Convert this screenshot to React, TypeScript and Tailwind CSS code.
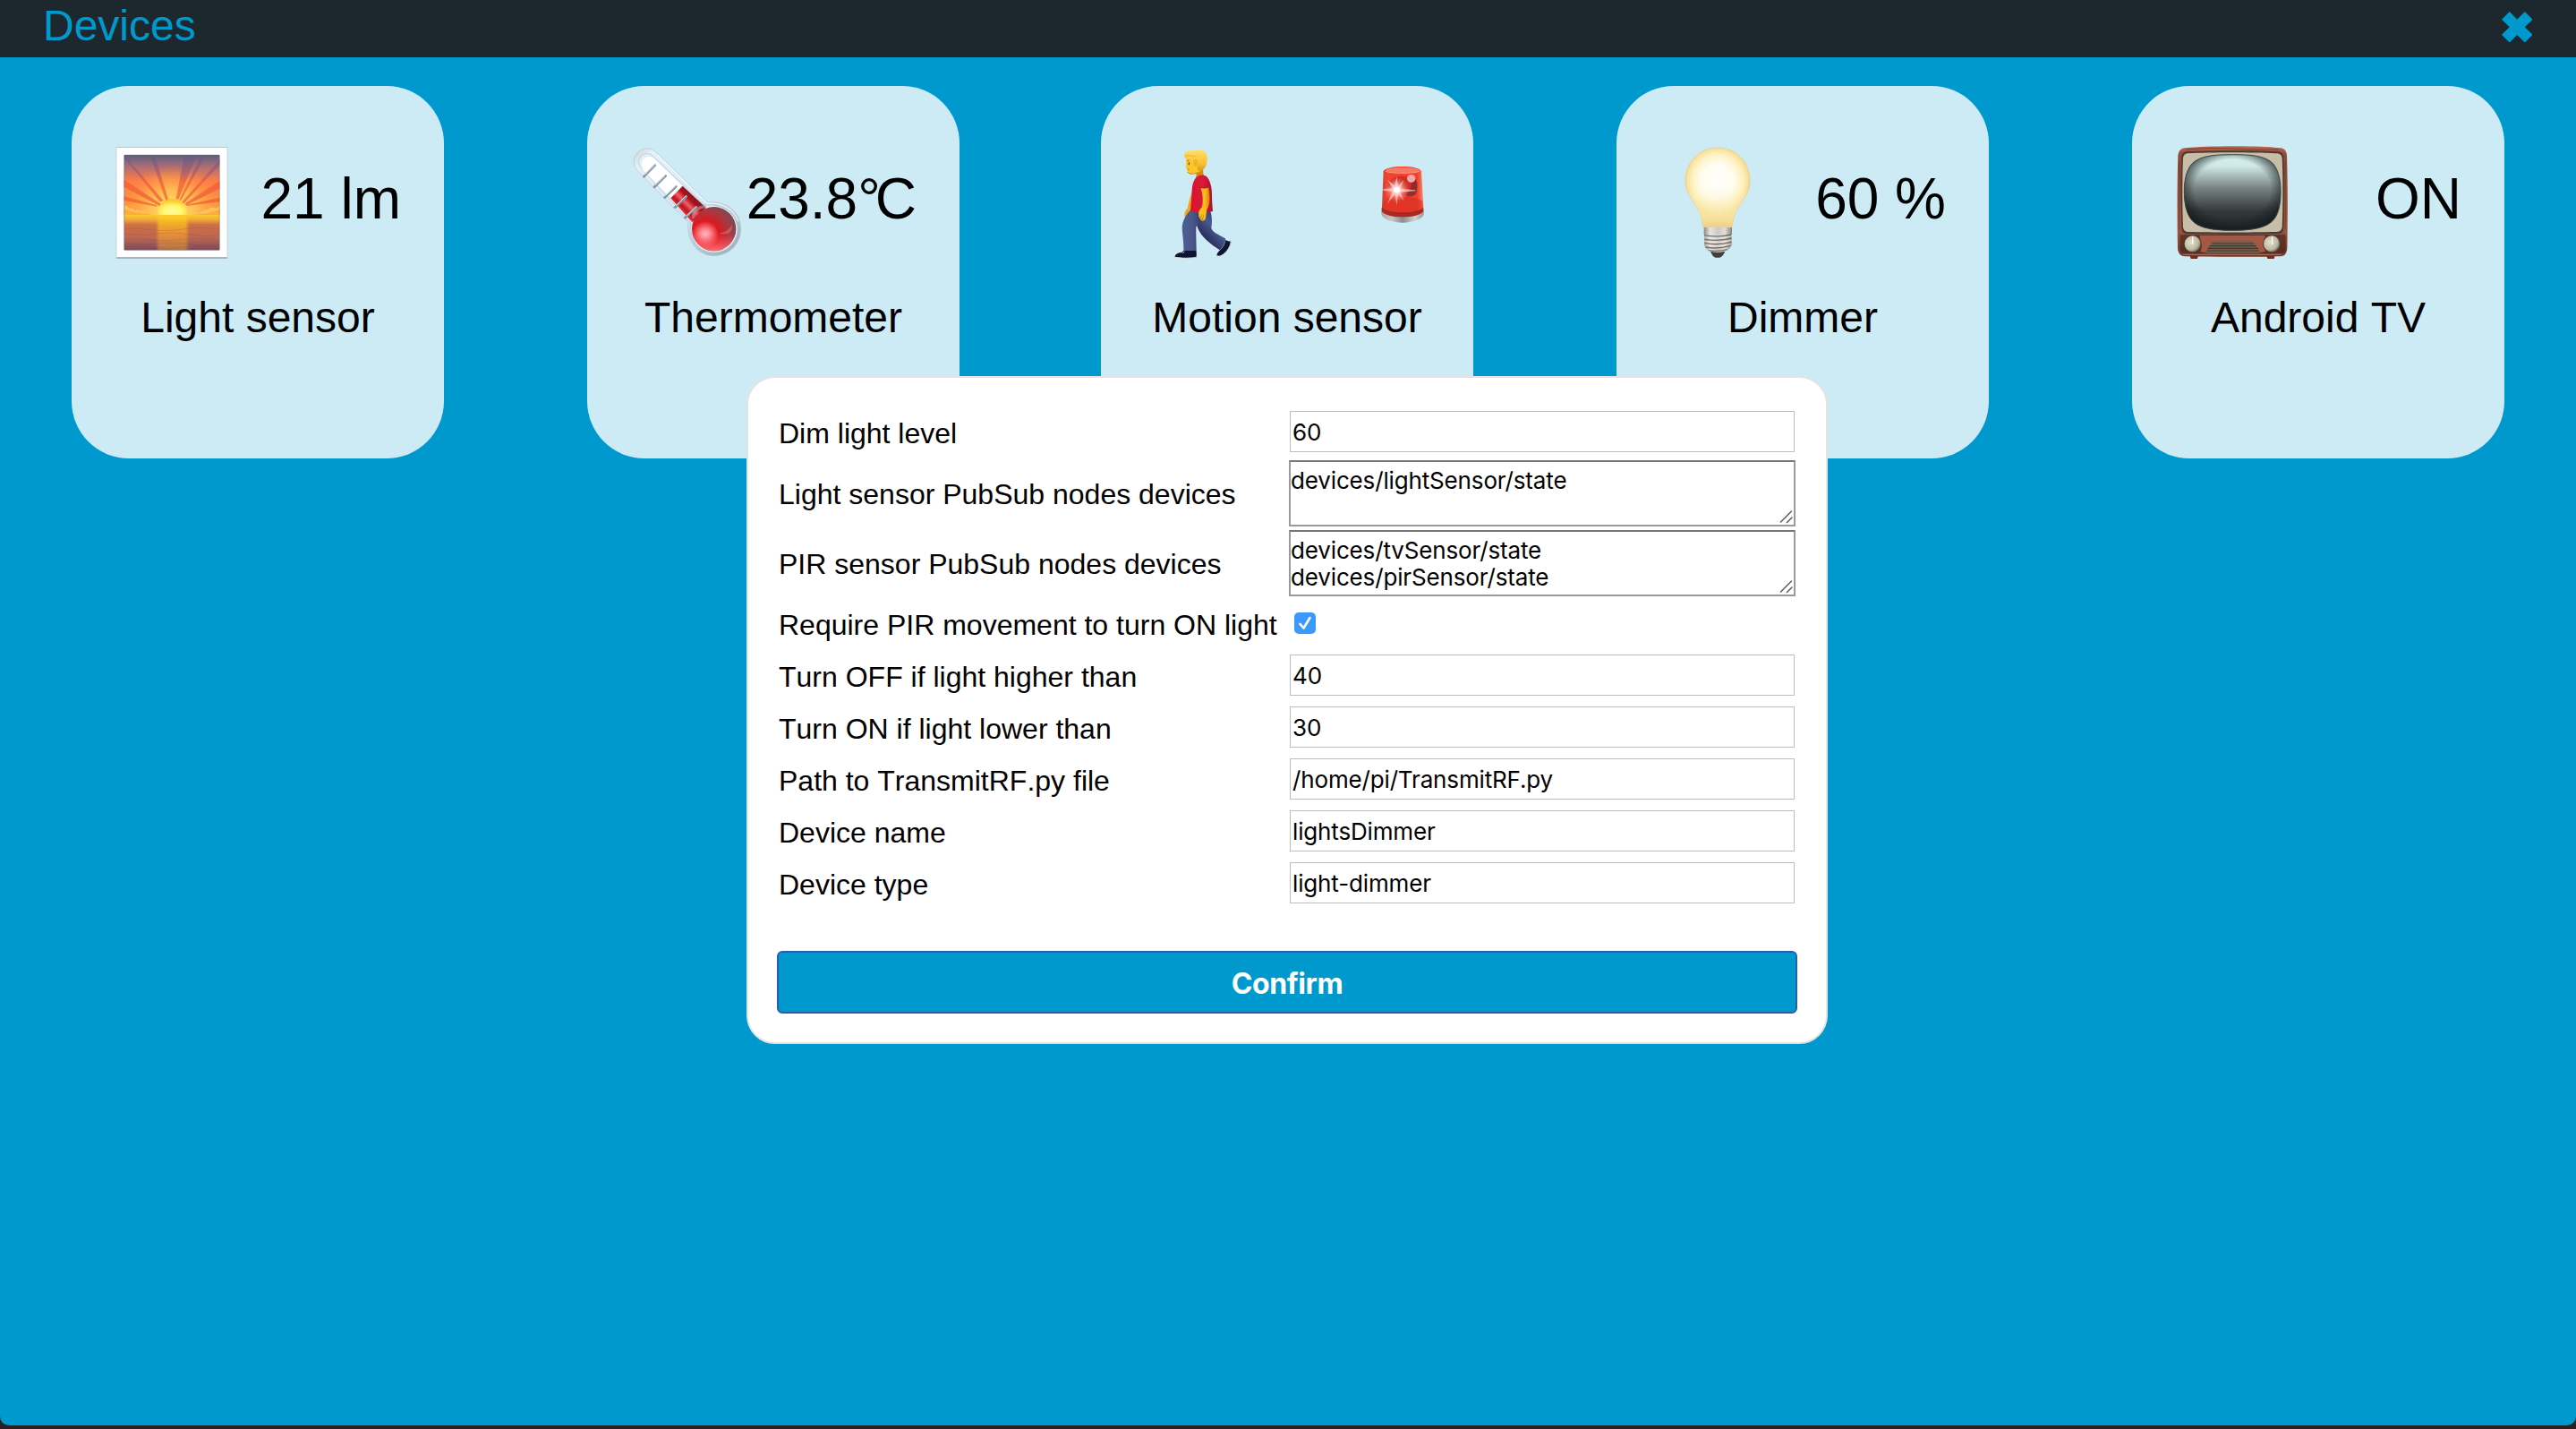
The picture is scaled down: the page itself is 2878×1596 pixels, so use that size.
import React from "react";

function SunriseIcon() {
  return (
    <svg className="size-32 shrink-0" viewBox="384 486 384 384">
      <defs>
        <linearGradient id="sky" x1="0" y1="0" x2="0" y2="1">
          <stop offset="0" stopColor="#5a6080" />
          <stop offset=".18" stopColor="#a86c76" />
          <stop offset=".42" stopColor="#fb7c48" />
          <stop offset=".75" stopColor="#fd9340" />
          <stop offset="1" stopColor="#fba63c" />
        </linearGradient>
        <radialGradient id="skyGlow" gradientUnits="userSpaceOnUse" cx="577" cy="715" r="160">
          <stop offset="0" stopColor="#ffec6a" />
          <stop offset=".5" stopColor="#ffc455" stopOpacity=".85" />
          <stop offset="1" stopColor="#ff9a45" stopOpacity="0" />
        </radialGradient>
        <linearGradient id="rays" x1="0" y1="0" x2="0" y2="1">
          <stop offset="0" stopColor="#5d5c84" />
          <stop offset=".35" stopColor="#a45a6e" />
          <stop offset=".55" stopColor="#f25c38" />
          <stop offset="1" stopColor="#ee5a30" />
        </linearGradient>
        <radialGradient id="sun" cx=".5" cy=".75" r=".7">
          <stop offset="0" stopColor="#ffff9c" />
          <stop offset=".5" stopColor="#fff56e" />
          <stop offset="1" stopColor="#fcc21c" />
        </radialGradient>
        <linearGradient id="sea" x1="0" y1="0" x2="0" y2="1">
          <stop offset="0" stopColor="#fdcb2e" />
          <stop offset=".14" stopColor="#f0a83a" />
          <stop offset=".28" stopColor="#cf7044" />
          <stop offset=".65" stopColor="#bd6650" />
          <stop offset="1" stopColor="#7c4c5a" />
        </linearGradient>
        <linearGradient id="glint" x1="0" y1="0" x2="0" y2="1">
          <stop offset="0" stopColor="#ffd21e" />
          <stop offset=".5" stopColor="#f09a30" />
          <stop offset="1" stopColor="#c07a48" />
        </linearGradient>
        <filter id="glintBlur" x="-20%" y="-5%" width="140%" height="110%">
          <feGaussianBlur stdDeviation="4 1" />
        </filter>
      </defs>
      <rect x="389" y="492" width="374" height="375" rx="3" fill="#b9c9ce" />
      <rect x="391" y="495" width="370" height="366" rx="1" fill="#fff" />
      <path d="M391 864h370" stroke="#8fa5aa" strokeWidth="3" />
      <rect x="416" y="519" width="320" height="202" fill="url(#sky)" />
      <rect x="416" y="555" width="320" height="166" fill="url(#skyGlow)" />
      <path
        d="M418 520 430 536 548 672 536 676 418 530ZM502 519h16L564 668l-8 4ZM618 519h42L598 668l-8-2ZM676 519h14L606 672l-5-2ZM736 535v18L616 682l-6-5ZM736 606v26L624 688l-4-6ZM416 602v24L534 690l5-7ZM416 658v14l110 20v-4ZM736 662v14l-110 14v-4Z"
        fill="url(#rays)"
        opacity=".7"
      />
      <path
        d="M416 721v-32c9-2 12 6 18 9 10-2 14 0 17 7 9-5 14-2 17 2 13-2 22 3 24 10l34 4ZM736 721v-28c-9 0-9 5-13 6-8-8-22-4-26 4-9-2-13 1-15 6-10-1-16 3-18 8l-38 4Z"
        fill="#fdc25e"
      />
      <path d="M416 721v-20c14 2 28 8 40 10l60 10ZM736 721v-18c-18 4-30 8-44 12l-50 6Z" fill="#ffac3e" />
      <path d="M528 721v-5a49.500 49.500 0 0 1 99 0v5Z" fill="url(#sun)" />
      <rect x="416" y="720" width="320" height="118" fill="url(#sea)" />
      <path d="M528 722h100v115H528z" fill="url(#glint)" filter="url(#glintBlur)" opacity=".85" />
      <path
        d="M418 768q40-5 90 2t110-3 116 2M418 784q60 6 110-1t120 4 86-3M418 802q40-6 88 1t104-1 124 2M418 817q60 5 110-1t120 3 86-2M418 829q50-4 100 1t110-2 106 2"
        fill="none"
        stroke="#6e3f4e"
        strokeWidth="2"
        opacity=".25"
      />
      <rect x="416.500" y="519.500" width="319" height="318" rx="2" fill="none" stroke="#53606c" strokeWidth="2" opacity=".65" />
    </svg>
  );
}

function ThermometerIcon() {
  return (
    <svg className="size-32 shrink-0" viewBox="192 246 384 384">
      <defs>
        <linearGradient id="glass" x1="0" y1="0" x2="1" y2="1">
          <stop offset="0" stopColor="#c9ccd0" />
          <stop offset=".1" stopColor="#e6f0fb" />
          <stop offset=".55" stopColor="#d4e8f4" />
          <stop offset="1" stopColor="#98a8b2" />
        </linearGradient>
        <radialGradient id="bulbRed" gradientUnits="userSpaceOnUse" cx="444" cy="546" r="108">
          <stop offset="0" stopColor="#ffc0c8" />
          <stop offset=".16" stopColor="#ff8a94" />
          <stop offset=".42" stopColor="#de1820" />
          <stop offset=".75" stopColor="#a83840" />
          <stop offset="1" stopColor="#7c4a54" />
        </radialGradient>
        <linearGradient id="bulbShine" x1="0" y1="0" x2="0" y2="1">
          <stop offset=".6" stopColor="#ff5058" stopOpacity="0" />
          <stop offset="1" stopColor="#ff6a72" />
        </linearGradient>
        <linearGradient id="column" gradientUnits="userSpaceOnUse" x1="345" y1="460" x2="410" y2="395">
          <stop offset="0" stopColor="#e85058" />
          <stop offset=".25" stopColor="#c8101a" />
          <stop offset=".42" stopColor="#f0606a" />
          <stop offset=".6" stopColor="#b01018" />
          <stop offset="1" stopColor="#5c2028" />
        </linearGradient>
      </defs>
      <path
        d="M217 332a42 42 0 0 1 62-62L452 438c54-9 111 29 111 88a89 89 0 0 1-89 91c-60 0-95-56-87-112Z"
        fill="url(#glass)"
        stroke="#b9c4ca"
        strokeWidth="2"
      />
      <path
        d="M228 322a28 28 0 0 1 42-38L440 448c56-8 112 22 112 80a78 78 0 0 1-78 78c-56 0-85-50-78-100Z"
        fill="#e2eff7"
        stroke="#9fc4d4"
        strokeWidth="2"
      />
      <path d="M230 312a26 26 0 0 1 38-24L368 384 330 424 236 332Z" fill="#fff" />
      <path d="M368 383 446 456 400 505 328 424Z" fill="url(#column)" />
      <path d="M404 492c-2-26 16-38 42-40" fill="none" stroke="#c49aa8" strokeWidth="10" opacity=".6" />
      <circle cx="473" cy="527" r="74" fill="url(#bulbRed)" />
      <circle cx="473" cy="527" r="74" fill="url(#bulbShine)" />
      <path d="M490 542c22-4 36-14 44-30 2 20-8 32-20 32-8 0-14 2-24-2Z" fill="#f08a90" opacity=".4" />
      <g fill="none" strokeLinecap="round">
        <path d="m238 352 37-38m-2 73 38-38m-3 73 38-37m-4 70 38-36m-4 71 38-36" stroke="#87959c" strokeWidth="8" />
        <path d="m242 345 32-32m3 66 32-31m2 67 34-33m1 67 34-34m2 68 32-31" stroke="#dfe6e9" strokeWidth="3" />
      </g>
      <path d="M284 280 450 442c52-6 92 22 104 60" fill="none" stroke="#f5fbff" strokeWidth="4" opacity=".8" />
    </svg>
  );
}

function WalkerIcon() {
  return (
    <svg className="size-32 shrink-0" viewBox="174 246 384 384">
      <defs>
        <linearGradient id="jeansFront" x1="0" y1="0" x2="1" y2="0">
          <stop offset="0" stopColor="#4a5f96" />
          <stop offset=".5" stopColor="#4a5788" />
          <stop offset="1" stopColor="#323562" />
        </linearGradient>
        <linearGradient id="jeansBack" x1=".3" y1=".7" x2=".7" y2=".2">
          <stop offset="0" stopColor="#2c2f5a" />
          <stop offset=".6" stopColor="#46598e" />
          <stop offset="1" stopColor="#384474" />
        </linearGradient>
        <linearGradient id="shirt" x1="0" y1="0" x2="1" y2="0">
          <stop offset="0" stopColor="#d61230" />
          <stop offset=".55" stopColor="#dc1a38" />
          <stop offset="1" stopColor="#a80f2c" />
        </linearGradient>
        <linearGradient id="skin" x1="0" y1="0" x2="1" y2="0">
          <stop offset="0" stopColor="#ffcc22" />
          <stop offset=".6" stopColor="#fbb818" />
          <stop offset="1" stopColor="#c88310" />
        </linearGradient>
        <linearGradient id="hair" x1="0" y1="0" x2="0" y2="1">
          <stop offset="0" stopColor="#ffdf66" />
          <stop offset=".6" stopColor="#f9c437" />
          <stop offset="1" stopColor="#dc951c" />
        </linearGradient>
      </defs>
      <path d="M336 400c-8 20-12 42-16 58-8 8-12 18-9 27 5 5 11 5 15 0l12-24Z" fill="#efa916" />
      <path d="M352 516c8 34 46 62 76 82 8-8 18-20 20-38-20-14-44-20-48-36 2-14 4-38-4-58l-38 6Z" fill="url(#jeansBack)" />
      <path d="M448 564c5 4 12 4 18 5 0 14-12 32-26 43-8 5-16 8-21 5-2-7 3-12 9-18 12-10 18-22 20-35Z" fill="#0d1630" />
      <path d="M465 570c0 14-12 32-26 43-7 5-14 7-19 4" fill="none" stroke="#d9cfd0" strokeWidth="3" />
      <path d="M328 466c-14 16-26 36-26 60 2 28 6 50 5 76h43c0-28-2-52-1-82 12-8 22-26 24-54Z" fill="url(#jeansFront)" />
      <path d="M308 600h41c2 8 2 16 0 23-24 2-52 2-71-1 0-9 8-14 18-16Z" fill="#0c1530" />
      <path d="M278 620c22 4 50 4 72 1v3c-22 3-52 3-72 0Z" fill="#e3d9d8" />
      <path d="m293 604 5-3m0 6 6-5m0 6 6-5" stroke="#fff" strokeWidth="2.500" />
      <path d="M350 335c0 12-1 18-4 24 8 10 24 6 30-8-4-8-4-18-3-30Z" fill="#cf8a10" />
      <path d="M356 350c10-6 26-4 32 6 10 14 14 36 14 56 0 24 2 42 3 56-24 6-52 5-75-1 2-26 4-44 5-68 1-22 6-40 21-49Z" fill="url(#shirt)" />
      <path d="M364 388c8 3 18 3 26-1 6 28 8 56-5 76l-4 29c-4 7-10 10-15 7l-8-13c-2-12 0-23 10-31 6-18 4-44-4-67Z" fill="url(#skin)" />
      <path d="M358 474c2 8 2 14 8 14l2-10m-4 10 6 10 4-18" fill="none" stroke="#bd7811" strokeWidth="2" />
      <path d="M362 387c8 4 18 4 27 0" fill="none" stroke="#98102a" strokeWidth="3" />
      <path d="M318 284c-3 13-3 22-3 28l-1 10 5 3 1 10c4 9 20 8 30 4 18-4 28-18 28-34l-12-22Z" fill="#fdc525" />
      <path d="M320 336c5 9 22 8 34 2" fill="none" stroke="#c4800e" strokeWidth="3" />
      <path d="M309 277c2-11 16-11 28-12 18-5 38-3 44 6 8 12 7 34 0 47l-12 14c-6 5-15 1-15-6 0-10-4-20-15-28-12 1-24-2-30-14Z" fill="url(#hair)" />
      <path d="M340 300c2-8 12-8 14 0l-4 18c-6 0-10-8-10-18Z" fill="#efad1e" opacity=".8" />
      <path d="M325 304v9" stroke="#5b3710" strokeWidth="3.500" />
      <path d="m318 299 8-3m-6 31 6 1" fill="none" stroke="#9c5c0c" strokeWidth="2.500" />
      <path d="M312 284c12-6 26-2 38 2" fill="none" stroke="#e3a229" strokeWidth="2" />
    </svg>
  );
}

function SirenIcon() {
  return (
    <svg className="mt-6 size-16 shrink-0" viewBox="942 318 192 192">
      <defs>
        <linearGradient id="dome" x1="0" y1="0" x2="1" y2="0">
          <stop offset="0" stopColor="#c84436" />
          <stop offset=".12" stopColor="#f2442f" />
          <stop offset=".85" stopColor="#f0402c" />
          <stop offset="1" stopColor="#f88870" />
        </linearGradient>
        <linearGradient id="sirenBase" x1="0" y1="0" x2="1" y2="0">
          <stop offset="0" stopColor="#aba6a2" />
          <stop offset=".25" stopColor="#c9c7c5" />
          <stop offset=".5" stopColor="#8e8d8c" />
          <stop offset=".8" stopColor="#d2d2d2" />
          <stop offset="1" stopColor="#8f9496" />
        </linearGradient>
        <radialGradient id="flash">
          <stop offset="0" stopColor="#fff" />
          <stop offset=".3" stopColor="#ffd9d2" stopOpacity=".85" />
          <stop offset="1" stopColor="#ff7060" stopOpacity="0" />
        </radialGradient>
      </defs>
      <path d="M970 468c0-8 20-14 71-14s71 6 71 14v10c-4 16-34 28-71 28s-67-12-71-28Z" fill="url(#sirenBase)" />
      <path d="M971 456h140v12c-10 12-34 19-70 19s-60-7-70-19Z" fill="#a92820" />
      <path d="M977 334c3-10 30-16 64-16s60 6 63 16l7 120c-6 10-30 17-70 17s-63-7-69-17Z" fill="url(#dome)" />
      <ellipse cx="1041" cy="330" rx="56" ry="9" fill="#f47a64" />
      <path d="M984 334c20 8 94 8 114 0" fill="none" stroke="#ff9f8c" strokeWidth="3" />
      <ellipse cx="1040" cy="382" rx="48" ry="32" fill="#c22a24" opacity=".75" />
      <path d="M1070 344c18 8 26 32 16 66-10 10-28 10-36 4 20-14 26-44 20-70Z" fill="#7d2b30" opacity=".8" />
      <ellipse cx="1070" cy="358" rx="14" ry="13" fill="#f4a9a8" />
      <path d="M976 436c20-24 110-24 132 0l2 22c-30 14-108 14-136 0Z" fill="#d62a20" opacity=".55" />
      <circle cx="1022" cy="396" r="42" fill="url(#flash)" />
      <path
        d="m1022 352 4 33 20-22-14 29 52 5v3l-52 4 14 28-20-22-5 38-5-38-26 32 18-40-32-4v-4l32-4-18-28 24 20Z"
        fill="#ffe0da"
        opacity=".65"
      />
      <circle cx="1022" cy="396" r="10" fill="#fff" />
    </svg>
  );
}

function BulbIcon() {
  return (
    <svg className="size-32 shrink-0" viewBox="192 246 384 384">
      <defs>
        <radialGradient id="lamp" gradientUnits="userSpaceOnUse" cx="386" cy="362" r="112" gradientTransform="translate(0 -18) scale(1 1.06)">
          <stop offset="0" stopColor="#fffefa" />
          <stop offset=".5" stopColor="#fffcf0" />
          <stop offset=".78" stopColor="#fdf0bc" />
          <stop offset="1" stopColor="#f5d67e" />
        </radialGradient>
        <linearGradient id="lampNeck" x1="0" y1="0" x2="0" y2="1">
          <stop offset=".5" stopColor="#fdf4cc" stopOpacity="0" />
          <stop offset=".85" stopColor="#f9e8a8" stopOpacity=".8" />
          <stop offset="1" stopColor="#ecd088" />
        </linearGradient>
        <linearGradient id="metal" x1="0" y1="0" x2="1" y2="0">
          <stop offset="0" stopColor="#8d857e" />
          <stop offset=".22" stopColor="#ece4dc" />
          <stop offset=".5" stopColor="#cfc8c1" />
          <stop offset=".75" stopColor="#e4ddd6" />
          <stop offset="1" stopColor="#8a837d" />
        </linearGradient>
      </defs>
      <path
        d="M387 255c62 0 108 48 108 111 0 58-54 82-58 146 0 6-2 9-8 9h-84c-6 0-8-3-8-9-4-64-58-88-58-146 0-63 46-111 108-111Z"
        fill="url(#lamp)"
        stroke="#e8c987"
        strokeWidth="2"
      />
      <path
        d="M387 255c62 0 108 48 108 111 0 58-54 82-58 146 0 6-2 9-8 9h-84c-6 0-8-3-8-9-4-64-58-88-58-146 0-63 46-111 108-111Z"
        fill="url(#lampNeck)"
      />
      <path d="M341 522h94v24h-94zM343 548h90l1 34-8 12-14 9h-50l-14-9-5-12Z" fill="url(#metal)" />
      <path
        d="M342 548q45 8 91-2M343 562q46 8 91-4M343 575q46 8 91-4M347 588q40 8 82-5M356 599q34 5 64-3"
        fill="none"
        stroke="#77716c"
        strokeWidth="4"
      />
      <path
        d="M344 555q45 8 89-3M344 568q45 8 89-3M346 581q42 8 86-4"
        fill="none"
        stroke="#f0ece8"
        strokeWidth="3"
        opacity=".7"
      />
      <path d="M363 602q24 6 49 0c-4 9-10 19-18 21h-14c-8-2-13-12-17-21Z" fill="#3f3f40" />
    </svg>
  );
}

function TvIcon() {
  return (
    <svg className="size-32 shrink-0" viewBox="180 246 384 384">
      <defs>
        <linearGradient id="wood" x1="0" y1="0" x2="0" y2="1">
          <stop offset="0" stopColor="#b86a52" />
          <stop offset=".08" stopColor="#8d4a38" />
          <stop offset=".75" stopColor="#9c5440" />
          <stop offset="1" stopColor="#6d3628" />
        </linearGradient>
        <linearGradient id="tube" x1="0" y1="0" x2="0" y2="1">
          <stop offset="0" stopColor="#d4f2ee" />
          <stop offset=".15" stopColor="#cfeae6" />
          <stop offset=".45" stopColor="#76807f" />
          <stop offset=".75" stopColor="#343838" />
          <stop offset="1" stopColor="#1f2425" />
        </linearGradient>
        <radialGradient id="tubeEdge" cx=".5" cy=".46" r=".58">
          <stop offset=".68" stopColor="#151c1e" stopOpacity="0" />
          <stop offset="1" stopColor="#151c1e" stopOpacity=".85" />
        </radialGradient>
        <radialGradient id="knob" cx=".4" cy=".4" r=".65">
          <stop offset="0" stopColor="#e4dfcc" />
          <stop offset=".7" stopColor="#bfb9a2" />
          <stop offset="1" stopColor="#6d6553" />
        </radialGradient>
      </defs>
      <path d="M229 614h29l-3 13h-22ZM486 614h29l-3 13h-22Z" fill="#6b2c20" />
      <path
        d="M212 256c80-8 244-8 322 0 14 2 20 12 21 26 3 100 3 210 1 310-1 16-8 26-22 27-100 2-226 2-322 0-14-1-22-11-23-27-2-100-2-210 1-310 1-14 8-24 22-26Z"
        fill="url(#wood)"
      />
      <path
        d="M194 300c4 60-3 140 1 230m355-230c-3 60 3 140-1 230M216 261q76-8 158-3t154 3M218 553q60 6 110-3t200 4M276 549l-4 22m28-22 2 14m30-14-3 12m44-12 1 14m34-14v14m30-15 3 18"
        fill="none"
        stroke="#6b3427"
        strokeWidth="3"
        opacity=".7"
      />
      <path
        d="M218 268c80-4 230-4 308 0 12 2 17 8 18 20 3 70 3 160 0 236-1 12-6 18-18 19-80 2-228 2-308 0-10-1-15-7-16-19-3-76-3-166 0-236 1-12 5-18 16-20Z"
        fill="#4e3a30"
      />
      <path
        d="M222 274c80-4 222-4 300 0 11 1 16 7 17 16 3 70 3 156 0 230-1 11-6 16-17 17-80 2-220 2-300 0-9-1-14-6-15-17-3-74-3-160 0-230 1-9 5-15 15-16Z"
        fill="#c8bda6"
      />
      <path
        d="M373 278c62 0 106 4 131 26 20 18 30 54 30 98 0 52-10 86-34 104-26 20-70 26-128 26s-102-6-127-26c-23-18-34-54-34-104 0-46 10-80 31-98 26-22 70-26 131-26Z"
        fill="url(#tube)"
      />
      <path
        d="M373 278c62 0 106 4 131 26 20 18 30 54 30 98 0 52-10 86-34 104-26 20-70 26-128 26s-102-6-127-26c-23-18-34-54-34-104 0-46 10-80 31-98 26-22 70-26 131-26Z"
        fill="url(#tubeEdge)"
        stroke="#3b4242"
        strokeWidth="3"
      />
      <path d="M202 546h342c6 0 7 4 7 8v40c0 9-6 14-13 14H210c-8 0-13-6-13-14v-40c0-4 1-8 5-8Z" fill="#3c211b" opacity=".55" />
      <path d="M262 549h220c0 22-8 44 2 54l-22 4c-10-28-24-40-36-40H322c-16 0-28 14-38 40l-20-4c10-10 2-34-2-54Z" fill="#a45843" />
      <path d="M284 608c8-26 22-42 40-42h102c16 0 28 14 38 42Z" fill="#75604f" />
      <path d="M304 576h140M296 584h156M291 592h168M287 600h176" stroke="#3f362e" strokeWidth="3.500" />
      <path d="M206 613h332" stroke="#c57b65" strokeWidth="2.500" />
      <circle cx="239" cy="577" r="30" fill="#4c3c30" />
      <circle cx="239" cy="577" r="27" fill="url(#knob)" />
      <circle cx="504" cy="577" r="30" fill="#4c3c30" />
      <circle cx="504" cy="577" r="27" fill="url(#knob)" />
      <path d="M239 553v26M506 553v26" stroke="#fff" strokeWidth="4" />
    </svg>
  );
}

const devices: { name: string; icon: React.ReactNode; value: React.ReactNode }[] = [
  { name: "Light sensor", icon: <SunriseIcon />, value: "21 lm" },
  {
    name: "Thermometer",
    icon: <ThermometerIcon />,
    value: (
      <>
        23.8<span className="tracking-[-6px]">°</span>C
      </>
    ),
  },
  { name: "Motion sensor", icon: <WalkerIcon />, value: null },
  { name: "Dimmer", icon: <BulbIcon />, value: "60 %" },
  { name: "Android TV", icon: <TvIcon />, value: "ON" },
];

type Field = { label: string; kind: "text" | "area" | "check"; value: string };

const fields: Field[] = [
  { label: "Dim light level", kind: "text", value: "60" },
  { label: "Light sensor PubSub nodes devices", kind: "area", value: "devices/lightSensor/state" },
  { label: "PIR sensor PubSub nodes devices", kind: "area", value: "devices/tvSensor/state\ndevices/pirSensor/state" },
  { label: "Require PIR movement to turn ON light", kind: "check", value: "" },
  { label: "Turn OFF if light higher than", kind: "text", value: "40" },
  { label: "Turn ON if light lower than", kind: "text", value: "30" },
  { label: "Path to TransmitRF.py file", kind: "text", value: "/home/pi/TransmitRF.py" },
  { label: "Device name", kind: "text", value: "lightsDimmer" },
  { label: "Device type", kind: "text", value: "light-dimmer" },
];

function Control({ field }: { field: Field }) {
  if (field.kind === "area") {
    return (
      <div className="relative mt-px h-[74px] w-[566px]">
        <textarea
          aria-label={field.label}
          defaultValue={field.value}
          className="block h-full w-full resize-none overflow-hidden border-2 border-[#9a9a9a] border-t-[#767676] bg-white pt-1.5 font-[Inter,sans-serif] text-[26px] leading-[30px] tracking-[-0.15px] [font-kerning:auto]"
        />
        <svg className="absolute right-[3px] bottom-[3px] h-[15px] w-[15px]" viewBox="0 0 15 15" fill="none" stroke="#5c5c5c" strokeWidth="1.500" strokeLinecap="round">
          <path d="M1.500 13 13.500 1M8.500 13.500l5.500-5.500" />
        </svg>
      </div>
    );
  }
  if (field.kind === "check") {
    return (
      <div className="mt-[15px] ml-1.5 flex size-6 items-center justify-center rounded-[5px] bg-[#3b99fc]">
        <svg className="size-6" viewBox="0 0 24 24" fill="none" stroke="#fff" strokeWidth="2.600" strokeLinecap="round" strokeLinejoin="round">
          <path d="m6.500 13 4 4.500 7-11.500" />
        </svg>
      </div>
    );
  }
  return (
    <input
      aria-label={field.label}
      defaultValue={field.value}
      className="mt-1 ml-px block h-[46px] w-[564px] border border-[#bdbdbd] bg-white px-0.5 font-[Inter,sans-serif] text-[26px] tracking-[-0.15px] [font-kerning:auto]"
    />
  );
}

export default function App() {
  return (
    <div className="h-[1596px] w-[2878px] overflow-hidden bg-[#2a2022] font-['Liberation_Sans',Arial,sans-serif] text-black [font-kerning:none]">
      <div className="relative h-[1592px] overflow-hidden rounded-b-[10px] bg-[#0099cd]">
        <header className="flex h-16 items-start justify-between bg-[#1c282e] pr-[49px] pl-12">
          <h1 className="mt-px text-[48px] leading-14 text-[#0099cd]">Devices</h1>
          <svg className="mt-[12.500px] size-[34.500px]" viewBox="164 38 103 103" fill="#0099cd">
            <path d="m190 38 25.500 26L241 38l26 26-26 25.500 26 25.500-26 26-25.500-25.500L190 141l-26-26 26-25.500L164 64Z" />
          </svg>
        </header>
        <main className="grid grid-cols-[576px_574px_576px_576px_416px] pt-8 pl-20">
          {devices.map((d) => (
            <section key={d.name} className="size-[416px] rounded-[64px] bg-[#cdebf5] px-12 pt-[66px]">
              <div className="flex h-32 justify-between">
                {d.icon}
                {d.value === null ? (
                  <SirenIcon />
                ) : (
                  <span className="mt-6 -ml-4 text-[64px] leading-[72px] whitespace-nowrap">{d.value}</span>
                )}
              </div>
              <h2 className="mt-[37px] text-center text-[48px] leading-14 whitespace-nowrap">{d.name}</h2>
            </section>
          ))}
        </main>
        <form className="absolute top-[420px] left-[834px] h-[746px] w-[1208px] rounded-[32px] border-2 border-[#e4e4e4] bg-white px-8 pt-[33px]">
          {fields.map((f) => (
            <label key={f.label} className={f.kind === "area" ? "flex h-[78px]" : "flex h-[58px]"}>
              <span className="flex w-[572px] shrink-0 items-center pl-0.5 text-[32px] leading-9 whitespace-nowrap">{f.label}</span>
              <Control field={f} />
            </label>
          ))}
          <button
            type="button"
            className="mt-[45px] block h-[70px] w-[1140px] rounded-md border-2 border-[#2a5db0] bg-[#0099cd] pt-1 font-[Inter,sans-serif] text-[32px] leading-9 font-bold tracking-[-0.4px] text-white [font-kerning:auto]"
          >
            Confirm
          </button>
        </form>
      </div>
    </div>
  );
}
